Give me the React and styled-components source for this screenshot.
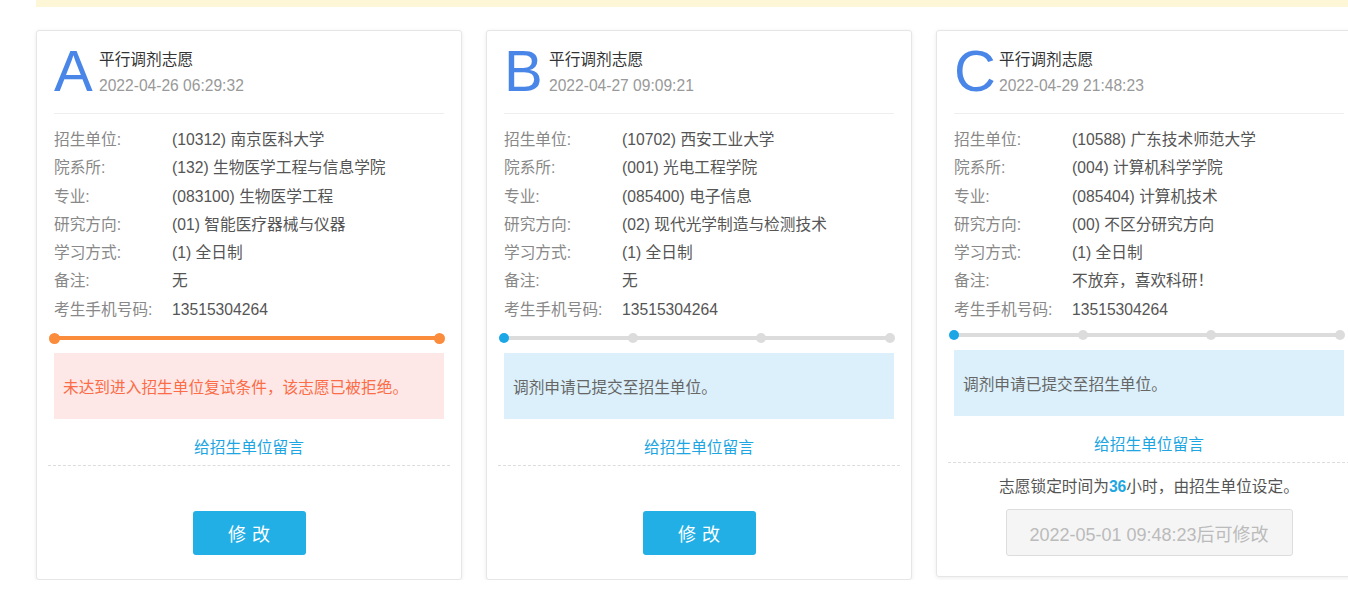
import React from 'react';
import styled, { createGlobalStyle } from 'styled-components';

const GlobalStyle = createGlobalStyle`
  html, body {
    margin: 0;
    padding: 0;
    background: #fff;
    overflow: hidden;
  }
  body {
    font-family: "Liberation Sans", Arial, "Noto Sans CJK SC", sans-serif;
    color: #555;
  }
`;

const colors = {
  blue: '#4a86e8',
  link: '#1ea6e2',
  btn: '#21afe6',
  orange: '#fb8c3c',
  grey: '#dcdcdc',
  dot: '#1ba7e5',
};

const TEXT = '15.7px';

const StyledPage = styled.div`
  padding-left: 36px;
  width: 1400px;
`;

const StyledNotice = styled.div`
  height: 7px;
  background: #fdf7d8;
  margin-bottom: 23px;
`;

const StyledCardRow = styled.div`
  display: flex;
  gap: 24px;
  align-items: flex-start;
`;

const StyledCard = styled.div`
  width: 426px;
  box-sizing: border-box;
  flex-shrink: 0;
  border: 1px solid #e6e6e6;
  border-radius: 3px;
  background: #fff;
  box-shadow: 0 1px 4px rgba(0, 0, 0, 0.08);
  display: flex;
  flex-direction: column;
`;

const StyledHead = styled.div`
  display: flex;
  margin: 0 17px;
  padding: 11px 0 13px;
  border-bottom: 1px solid #eeeeee;
`;

const StyledLetter = styled.div`
  width: 45px;
  font-size: 58px;
  line-height: 58px;
  color: ${colors.blue};
`;

const StyledHeadText = styled.div`
  display: flex;
  flex-direction: column;
  padding-top: 6px;
`;

const StyledTitle = styled.div`
  font-size: ${TEXT};
  line-height: 24px;
  color: #333;
`;

const StyledDate = styled.div`
  font-size: 15.6px;
  line-height: 27px;
  color: #999;
`;

const StyledInfo = styled.div`
  display: flex;
  flex-direction: column;
  padding: 12px 17px 0;
`;

const StyledRow = styled.div`
  display: flex;
  font-size: ${TEXT};
  line-height: 28.3px;
`;

const StyledLabel = styled.span`
  width: 118px;
  flex-shrink: 0;
  color: #888;
`;

const StyledValue = styled.span`
  color: #555;
`;

const StyledSteps = styled.div`
  position: relative;
  display: flex;
  justify-content: space-between;
  align-items: center;
  margin: ${({ $top }) => $top}px 16px 0 12px;
  height: 10px;
  &::before {
    content: '';
    position: absolute;
    left: 4px;
    right: 4px;
    top: 3px;
    height: 4px;
    background: ${({ $done }) => ($done ? colors.orange : colors.grey)};
  }
`;

const StyledDot = styled.span`
  position: relative;
  width: ${({ $size }) => $size}px;
  height: ${({ $size }) => $size}px;
  border-radius: 50%;
  background: ${({ $color }) => $color};
`;

const StyledMessage = styled.div`
  margin: 10px 17px 0;
  height: 66px;
  display: flex;
  align-items: center;
  padding: 0 9px;
  font-size: ${TEXT};
  background: ${({ $error }) => ($error ? '#fee8e7' : '#dbf0fb')};
  color: ${({ $error }) => ($error ? '#fb6c47' : '#666')};
`;

const StyledLink = styled.a`
  display: block;
  margin: 19px 11px 0;
  padding-bottom: 7px;
  border-bottom: 1px dashed #dddddd;
  text-align: center;
  font-size: ${TEXT};
  line-height: 20px;
  color: ${colors.link};
  text-decoration: none;
`;

const StyledFooter = styled.div`
  height: 113px;
  box-sizing: border-box;
  padding-bottom: ${({ $bottom }) => $bottom}px;
  display: flex;
  flex-direction: column;
  align-items: center;
  justify-content: flex-end;
  gap: 12px;
`;

const StyledLockText = styled.div`
  font-size: ${TEXT};
  line-height: 20px;
  color: #555;
  b {
    color: ${colors.link};
  }
`;

const StyledButton = styled.button`
  width: 113px;
  height: 44px;
  border: 0;
  border-radius: 3px;
  background: ${colors.btn};
  color: #fff;
  font-family: inherit;
  font-size: 18px;
  letter-spacing: 6px;
  text-indent: 6px;
  cursor: pointer;
`;

const StyledDisabledButton = styled.button`
  width: 287px;
  height: 47px;
  border: 1px solid #dddddd;
  border-radius: 3px;
  background: #f5f5f5;
  color: #bbb;
  font-family: inherit;
  font-size: 18px;
`;

const wishes = [
  {
    letter: 'A',
    date: '2022-04-26 06:29:32',
    rows: [
      ['招生单位:', '(10312) 南京医科大学'],
      ['院系所:', '(132) 生物医学工程与信息学院'],
      ['专业:', '(083100) 生物医学工程'],
      ['研究方向:', '(01) 智能医疗器械与仪器'],
      ['学习方式:', '(1) 全日制'],
      ['备注:', '无'],
      ['考生手机号码:', '13515304264'],
    ],
    steps: 2,
    done: true,
    error: true,
    message: '未达到进入招生单位复试条件，该志愿已被拒绝。',
  },
  {
    letter: 'B',
    date: '2022-04-27 09:09:21',
    rows: [
      ['招生单位:', '(10702) 西安工业大学'],
      ['院系所:', '(001) 光电工程学院'],
      ['专业:', '(085400) 电子信息'],
      ['研究方向:', '(02) 现代光学制造与检测技术'],
      ['学习方式:', '(1) 全日制'],
      ['备注:', '无'],
      ['考生手机号码:', '13515304264'],
    ],
    steps: 4,
    message: '调剂申请已提交至招生单位。',
  },
  {
    letter: 'C',
    date: '2022-04-29 21:48:23',
    rows: [
      ['招生单位:', '(10588) 广东技术师范大学'],
      ['院系所:', '(004) 计算机科学学院'],
      ['专业:', '(085404) 计算机技术'],
      ['研究方向:', '(00) 不区分研究方向'],
      ['学习方式:', '(1) 全日制'],
      ['备注:', '不放弃，喜欢科研！'],
      ['考生手机号码:', '13515304264'],
    ],
    steps: 4,
    locked: true,
    message: '调剂申请已提交至招生单位。',
  },
];

const WishCard = ({ wish }) => {
  const dots = Array.from({ length: wish.steps });
  const dotColor = (i) => {
    if (wish.done) return colors.orange;
    return i === 0 ? colors.dot : colors.grey;
  };
  return (
    <StyledCard>
      <StyledHead>
        <StyledLetter>{wish.letter}</StyledLetter>
        <StyledHeadText>
          <StyledTitle>平行调剂志愿</StyledTitle>
          <StyledDate>{wish.date}</StyledDate>
        </StyledHeadText>
      </StyledHead>
      <StyledInfo>
        {wish.rows.map(([label, value]) => (
          <StyledRow key={label}>
            <StyledLabel>{label}</StyledLabel>
            <StyledValue>{value}</StyledValue>
          </StyledRow>
        ))}
      </StyledInfo>
      <StyledSteps $done={wish.done} $top={wish.locked ? 6 : 9}>
        {dots.map((_, i) => (
          <StyledDot key={i} $size={wish.done ? 11 : 10} $color={dotColor(i)} />
        ))}
      </StyledSteps>
      <StyledMessage $error={wish.error}>{wish.message}</StyledMessage>
      <StyledLink href="#">给招生单位留言</StyledLink>
      <StyledFooter $bottom={wish.locked ? 20 : 24}>
        {wish.locked ? (
          <>
            <StyledLockText>
              志愿锁定时间为<b>36</b>小时，由招生单位设定。
            </StyledLockText>
            <StyledDisabledButton disabled>2022-05-01 09:48:23后可修改</StyledDisabledButton>
          </>
        ) : (
          <StyledButton>修改</StyledButton>
        )}
      </StyledFooter>
    </StyledCard>
  );
};

const App = () => (
  <StyledPage>
    <GlobalStyle />
    <StyledNotice />
    <StyledCardRow>
      {wishes.map((wish) => (
        <WishCard key={wish.letter} wish={wish} />
      ))}
    </StyledCardRow>
  </StyledPage>
);

export default App;
